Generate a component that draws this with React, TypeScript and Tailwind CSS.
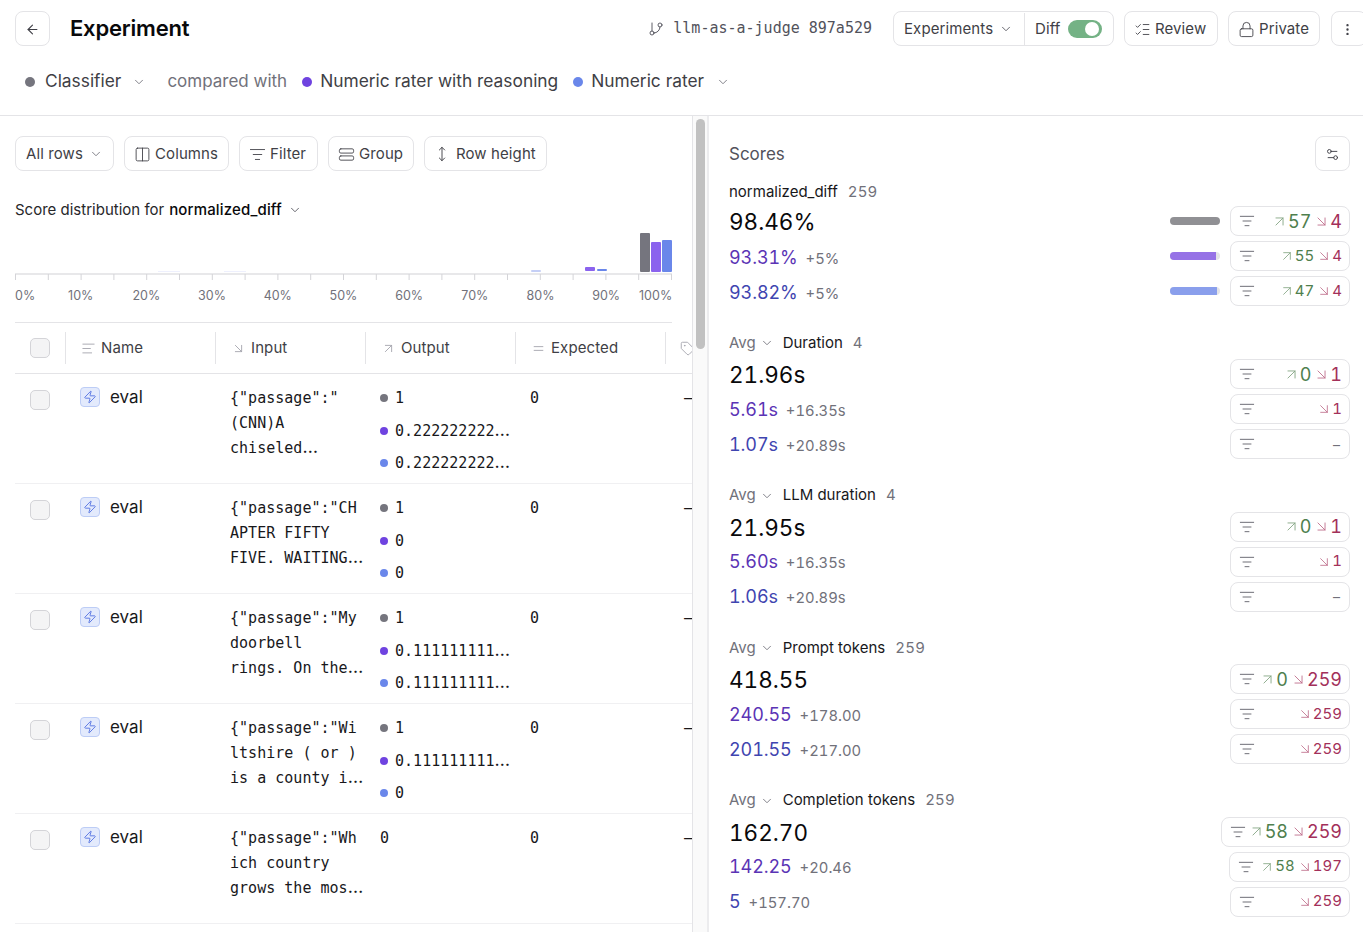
import {
  ArrowDownRight,
  ArrowLeft,
  ArrowUpRight,
  ChevronDown,
  Columns2,
  EllipsisVertical,
  Equal,
  GitBranch,
  ListChecks,
  ListFilter,
  Lock,
  MoveVertical,
  Settings2,
  StretchHorizontal,
  Tag,
  Text,
  Zap,
} from "lucide-react";
import type { ReactNode } from "react";

const GRAY = "bg-[#75757e]";
const PURPLE = "bg-[#6f43e0]";
const BLUE = "bg-[#6a87ea]";

function Btn({ children, className = "" }: { children: ReactNode; className?: string }) {
  return (
    <div className={`flex h-[35px] shrink-0 items-center rounded-lg border border-[#e4e4e7] bg-white pt-[1px] text-[15px] tracking-[0.1px] text-[#3f3f46] ${className}`}>
      {children}
    </div>
  );
}

function Dot({ color, size = "w-[10px] h-[10px]" }: { color: string; size?: string }) {
  return <span className={`shrink-0 rounded-full ${size} ${color}`} />;
}

function Header() {
  return (
    <div className="h-[116px] shrink-0 border-b border-[#e4e4e7] pl-[15px]">
      <div className="flex h-[57px] items-center">
        <Btn className="w-[35px] justify-center">
          <ArrowLeft size={15} strokeWidth={1.75} />
        </Btn>
        <div className="ml-[20px] text-[22px] font-semibold tracking-[-0.2px] text-[#09090b]">Experiment</div>
        <div className="ml-auto flex items-center">
          <GitBranch size={16} strokeWidth={1.4} className="mr-[9px] text-[#52525b]" />
          <span className="mr-[21px] font-['DejaVu_Sans_Mono'] text-[15px] text-[#52525b]">llm-as-a-judge 897a529</span>
          <Btn className="mr-[10px] w-[221px]">
            <div className="flex h-full w-[131px] items-center border-r border-[#e4e4e7] pl-[10px]">
              Experiments
              <ChevronDown size={14} strokeWidth={1.5} className="ml-[6px] text-[#52525b]" />
            </div>
            <div className="ml-[10px]">Diff</div>
            <div className="ml-[8px] flex h-[18px] w-[34px] items-center justify-end rounded-full bg-[#74b285] pr-[3px]">
              <div className="h-[14px] w-[14px] rounded-full bg-white" />
            </div>
          </Btn>
          <Btn className="mr-[10px] w-[94px] pl-[9px]">
            <ListChecks size={17} strokeWidth={1.25} className="mr-[4px]" />
            Review
          </Btn>
          <Btn className="mr-[11px] w-[92px] pl-[9px]">
            <Lock size={17} strokeWidth={1.25} className="mr-[4px]" />
            Private
          </Btn>
          <Btn className="-mr-[4px] w-[36px] pl-[8px]">
            <EllipsisVertical size={15} strokeWidth={1.75} />
          </Btn>
        </div>
      </div>
      <div className="flex h-[49px] items-center pl-[10px] text-[17.35px] text-[#3f3f46]">
        <Dot color={GRAY} />
        <span className="ml-[10px]">Classifier</span>
        <ChevronDown size={14} strokeWidth={1.5} className="ml-[11px] text-[#71717a]" />
        <span className="ml-[21px] text-[17px] text-[#71717a]">compared with</span>
        <Dot color={PURPLE} size="ml-[15px] w-[10px] h-[10px]" />
        <span className="ml-[8px]">Numeric rater with reasoning</span>
        <Dot color={BLUE} size="ml-[15px] w-[10px] h-[10px]" />
        <span className="ml-[8px]">Numeric rater</span>
        <ChevronDown size={14} strokeWidth={1.5} className="ml-[12px] text-[#71717a]" />
      </div>
    </div>
  );
}

function Toolbar() {
  return (
    <div className="flex items-center gap-[10px]">
      <Btn className="w-[99px] pl-[10px]">
        All rows
        <ChevronDown size={14} strokeWidth={1.5} className="ml-[6px] text-[#71717a]" />
      </Btn>
      <Btn className="w-[105px] pl-[9px]">
        <Columns2 size={17} strokeWidth={1.25} className="mr-[4px]" />
        Columns
      </Btn>
      <Btn className="w-[79px] pl-[9px]">
        <ListFilter size={17} strokeWidth={1.25} className="mr-[4px]" />
        Filter
      </Btn>
      <Btn className="w-[86px] pl-[9px]">
        <StretchHorizontal size={17} strokeWidth={1.25} className="mr-[4px]" />
        Group
      </Btn>
      <Btn className="w-[123px] pl-[9px]">
        <MoveVertical size={16} strokeWidth={1.4} className="mr-[6px]" />
        Row height
      </Btn>
    </div>
  );
}

const pctLabels = ["10%", "20%", "30%", "40%", "50%", "60%", "70%", "80%", "90%"];

function Histogram() {
  const ticks = Array.from({ length: 21 }, (_, i) => 0.5 + i * 32.8);
  return (
    <div>
      <svg width="657" height="50" className="mt-[11px] block">
        <rect x="143" y="38" width="22" height="1" fill="#eef0fd" />
        <rect x="209" y="38" width="22" height="1" fill="#eef0fd" />
        <rect x="516" y="37" width="10" height="2" rx="1" fill="#c5cff6" />
        <rect x="570" y="34" width="10" height="4" rx="1" fill="#8b63ee" />
        <rect x="582" y="36" width="10" height="2" rx="1" fill="#6a87ea" />
        <rect x="625" y="0" width="10" height="39" rx="1" fill="#75757e" />
        <rect x="636" y="9" width="10" height="30" rx="1" fill="#8b63ee" />
        <rect x="647" y="7" width="10" height="32" rx="1" fill="#6a87ea" />
        <rect x="0" y="40" width="657" height="2" fill="#e8e8ea" />
        {ticks.map((x) => (
          <line key={x} x1={x} x2={x} y1="41" y2="47" stroke="#d4d4d8" />
        ))}
      </svg>
      <div className="mt-[4px] flex text-[12.5px] text-[#71717a]">
        <span className="w-[32.85px] shrink-0">0%</span>
        {pctLabels.map((l) => (
          <span key={l} className="w-[65.7px] shrink-0 text-center">{l}</span>
        ))}
        <span className="w-[32.85px] shrink-0 whitespace-nowrap text-right">100%</span>
      </div>
    </div>
  );
}

function HeadCell({ icon, label }: { icon: ReactNode; label: string }) {
  return (
    <div className="flex w-[150px] shrink-0 items-center">
      <div className="flex h-[32px] w-full items-center gap-[5px] border-l border-[#e4e4e7] pl-[15px] text-[15px] tracking-[0.1px] text-[#3f3f46]">
        <span className="text-[#a1a1aa]">{icon}</span>
        {label}
      </div>
    </div>
  );
}

function Check() {
  return <div className="h-[20px] w-[20px] rounded-[5px] border border-[#d4d4d8] bg-[#f4f4f5]" />;
}

function TableHead() {
  return (
    <div className="flex h-[51px] w-[700px] items-center border-b border-[#e4e4e7]">
      <div className="w-[50px] shrink-0 pl-[15px]">
        <Check />
      </div>
      <HeadCell icon={<Text size={15} strokeWidth={1.4} />} label="Name" />
      <HeadCell icon={<ArrowDownRight size={15} strokeWidth={1.4} />} label="Input" />
      <HeadCell icon={<ArrowUpRight size={15} strokeWidth={1.4} />} label="Output" />
      <HeadCell icon={<Equal size={15} strokeWidth={1.4} />} label="Expected" />
      <div className="flex h-[32px] items-center border-l border-[#e4e4e7] pl-[14px] text-[#a1a1aa]">
        <Tag size={15} strokeWidth={1.4} />
      </div>
    </div>
  );
}

// the ellipsis in the reference comes from a wider proportional font
function Mono({ text }: { text: string }) {
  if (!text.endsWith("…")) return <>{text}</>;
  return (
    <>
      {text.slice(0, -1)}
      <span className="font-['Inter'] text-[18px] leading-none">…</span>
    </>
  );
}

type RowData = { input: string[]; outputs: string[] };

const rows: RowData[] = [
  { input: ['{"passage":"', "(CNN)A", "chiseled…"], outputs: ["1", "0.222222222…", "0.222222222…"] },
  { input: ['{"passage":"CH', "APTER FIFTY", "FIVE. WAITING…"], outputs: ["1", "0", "0"] },
  { input: ['{"passage":"My', "doorbell", "rings. On the…"], outputs: ["1", "0.111111111…", "0.111111111…"] },
  { input: ['{"passage":"Wi', "ltshire ( or )", "is a county i…"], outputs: ["1", "0.111111111…", "0"] },
  { input: ['{"passage":"Wh', "ich country", "grows the mos…"], outputs: ["0"] },
];

function TableRow({ row }: { row: RowData }) {
  const colors = [GRAY, PURPLE, BLUE];
  return (
    <div className="flex h-[110px] w-[700px] shrink-0 border-b border-[#f0f0f2] font-['DejaVu_Sans_Mono'] text-[15px] tracking-[0.02px] text-[#18181b]">
      <div className="w-[50px] shrink-0 pl-[15px] pt-[16px]">
        <Check />
      </div>
      <div className="flex w-[150px] shrink-0 items-start pl-[15px] pt-[13px] font-['Inter'] text-[17px] leading-[20px]">
        <div className="flex h-[20px] w-[20px] items-center justify-center rounded-[4px] border border-[#bdcdf6] bg-[#e3eafc] text-[#4f6ee0]">
          <Zap size={14} strokeWidth={1.5} />
        </div>
        <span className="ml-[10px]">eval</span>
      </div>
      <div className="w-[150px] shrink-0 pl-[15px] pt-[12px] leading-[25px] whitespace-pre">
        {row.input.map((t) => (
          <div key={t}>
            <Mono text={t} />
          </div>
        ))}
      </div>
      <div className="w-[150px] shrink-0 pl-[15px] pt-[12px]">
        {row.outputs.map((t, i) =>
          row.outputs.length === 1 ? (
            <div key={i} className="leading-[25px]">{t}</div>
          ) : (
            <div key={i} className="flex h-[32.5px] items-start leading-[25px]">
              <Dot color={colors[i]} size="mr-[7px] mt-[8px] w-[8px] h-[8px]" />
              <span>
                <Mono text={t} />
              </span>
            </div>
          ),
        )}
      </div>
      <div className="w-[150px] shrink-0 pl-[15px] pt-[12px] leading-[25px]">0</div>
      <div className="pl-[19px] pt-[12px] leading-[25px]">–</div>
    </div>
  );
}

function LeftPanel() {
  return (
    <div className="flex w-[709px] shrink-0 border-r-2 border-[#ececee]">
      <div className="w-[692px] shrink-0 overflow-hidden pl-[15px] pt-[20px]">
        <Toolbar />
        <div className="mt-[28px] flex items-center text-[15px] text-[#27272a]">
          Score distribution for<span className="ml-[5px] font-medium tracking-[0.15px] text-[#09090b]">normalized_diff</span>
          <ChevronDown size={14} strokeWidth={1.5} className="ml-[6px] text-[#52525b]" />
        </div>
        <div className="w-[657px] border-b border-[#e4e4e7] pb-[17px]">
          <Histogram />
        </div>
        <TableHead />
        {rows.map((r) => (
          <TableRow key={r.input[0]} row={r} />
        ))}
      </div>
      <div className="w-[15px] shrink-0 border-l border-[#e4e4e7] bg-[#fafafa] pl-[3px] pt-[3px]">
        <div className="h-[230px] w-[9px] rounded-full bg-[#c1c1c1]" />
      </div>
    </div>
  );
}

type Chip = { up?: string; down?: string; big?: boolean; wide?: string };
type Line = { value: string; delta?: string; bar?: { fill: string; pct: string }; chip: Chip };
type Section = { avg?: boolean; title: string; count: string; lines: Line[] };

const sections: Section[] = [
  {
    title: "normalized_diff",
    count: "259",
    lines: [
      { value: "98.46%", bar: { fill: "bg-[#909094]", pct: "w-full" }, chip: { up: "57", down: "4", big: true } },
      { value: "93.31%", delta: "+5%", bar: { fill: "bg-[#9672e6]", pct: "w-[46px]" }, chip: { up: "55", down: "4" } },
      { value: "93.82%", delta: "+5%", bar: { fill: "bg-[#8a9fec]", pct: "w-[47px]" }, chip: { up: "47", down: "4" } },
    ],
  },
  {
    avg: true,
    title: "Duration",
    count: "4",
    lines: [
      { value: "21.96s", chip: { up: "0", down: "1", big: true } },
      { value: "5.61s", delta: "+16.35s", chip: { down: "1" } },
      { value: "1.07s", delta: "+20.89s", chip: {} },
    ],
  },
  {
    avg: true,
    title: "LLM duration",
    count: "4",
    lines: [
      { value: "21.95s", chip: { up: "0", down: "1", big: true } },
      { value: "5.60s", delta: "+16.35s", chip: { down: "1" } },
      { value: "1.06s", delta: "+20.89s", chip: {} },
    ],
  },
  {
    avg: true,
    title: "Prompt tokens",
    count: "259",
    lines: [
      { value: "418.55", chip: { up: "0", down: "259", big: true } },
      { value: "240.55", delta: "+178.00", chip: { down: "259" } },
      { value: "201.55", delta: "+217.00", chip: { down: "259" } },
    ],
  },
  {
    avg: true,
    title: "Completion tokens",
    count: "259",
    lines: [
      { value: "162.70", chip: { up: "58", down: "259", big: true, wide: "w-[129px]" } },
      { value: "142.25", delta: "+20.46", chip: { up: "58", down: "197", wide: "w-[121px]" } },
      { value: "5", delta: "+157.70", chip: { down: "259" } },
    ],
  },
];

function DiffChip({ chip }: { chip: Chip }) {
  const num = chip.big ? "text-[18px]" : "text-[15px]";
  const arrow = chip.big ? 17 : 16;
  return (
    <div className={`flex h-[30px] items-center rounded-lg border border-[#e4e4e7] pl-[8px] pr-[7px] ${chip.wide ?? "w-[120px]"}`}>
      <ListFilter size={16} strokeWidth={1.25} className="shrink-0 text-[#52525b]" />
      <div className={`ml-auto flex items-center tabular-nums ${num}`}>
        {chip.up && (
          <span className="flex items-center text-[#4f7f4e]">
            <ArrowUpRight size={arrow} strokeWidth={1.25} className="opacity-70" />
            {chip.up}
          </span>
        )}
        {chip.down && (
          <span className="ml-[2px] flex items-center text-[#a3305a]">
            <ArrowDownRight size={arrow} strokeWidth={1.25} className="opacity-70" />
            {chip.down}
          </span>
        )}
        {!chip.up && !chip.down && <span className="pr-[2px] text-[14px] text-[#71717a]">–</span>}
      </div>
    </div>
  );
}

function ScoreLine({ line, index, avg }: { line: Line; index: number; avg?: boolean }) {
  const valueCls =
    index === 0
      ? "text-[22.5px] text-[#09090b]"
      : index === 1
        ? "text-[18px] tracking-[-0.1px] text-[#5b34b5]"
        : "text-[18px] tracking-[-0.1px] text-[#3f45b0]";
  // the big value and the first section sit a little lower than their chips
  const nudge = index === 0 ? "pt-[2px]" : avg ? "" : "pt-[3px]";
  return (
    <div className="flex h-[35px] items-start pt-[2px]">
      <div className={`flex h-[30px] items-center ${nudge}`}>
        <div className="flex items-baseline tabular-nums">
          <span className={valueCls}>{line.value}</span>
          {line.delta && <span className="ml-[8px] text-[14.8px] text-[#71717a]">{line.delta}</span>}
        </div>
      </div>
      <div className="ml-auto flex items-center gap-[10px]">
        {line.bar && (
          <div className="h-[8px] w-[50px] overflow-hidden rounded-full bg-[#e4e4e7]">
            <div className={`h-full ${line.bar.pct} ${line.bar.fill}`} />
          </div>
        )}
        <DiffChip chip={line.chip} />
      </div>
    </div>
  );
}

function ScoreSection({ s }: { s: Section }) {
  return (
    <div className={s.avg ? "h-[152.5px]" : "h-[150px]"}>
      <div className={`flex items-center text-[15px] text-[#18181b] ${s.avg ? "mb-[2px] h-[24px]" : "h-[23px]"}`}>
        {s.avg && (
          <span className="mr-[9px] flex items-center text-[#71717a]">
            Avg
            <ChevronDown size={14} strokeWidth={1.5} className="ml-[4px]" />
          </span>
        )}
        {s.title}
        <span className="ml-[10px] tabular-nums tracking-[0.2px] text-[#71717a]">{s.count}</span>
      </div>
      {s.lines.map((l, i) => (
        <ScoreLine key={i} line={l} index={i} avg={s.avg} />
      ))}
    </div>
  );
}

function ScoresPanel() {
  return (
    <div className="min-w-0 flex-1 overflow-hidden pl-[20px] pr-[13px] pt-[20px]">
      <div className="flex h-[35px] items-center justify-between">
        <span className="pt-[3px] text-[17px] text-[#52525b]">Scores</span>
        <Btn className="w-[35px] justify-center">
          <Settings2 size={15} strokeWidth={1.5} />
        </Btn>
      </div>
      <div className="mt-[10px]">
        {sections.map((s) => (
          <ScoreSection key={s.title} s={s} />
        ))}
      </div>
    </div>
  );
}

export default function App() {
  return (
    <div className="flex h-[932px] w-full flex-col overflow-hidden bg-white font-['Inter','Noto_Sans',sans-serif]">
      <Header />
      <div className="flex min-h-0 flex-1">
        <LeftPanel />
        <ScoresPanel />
      </div>
    </div>
  );
}
